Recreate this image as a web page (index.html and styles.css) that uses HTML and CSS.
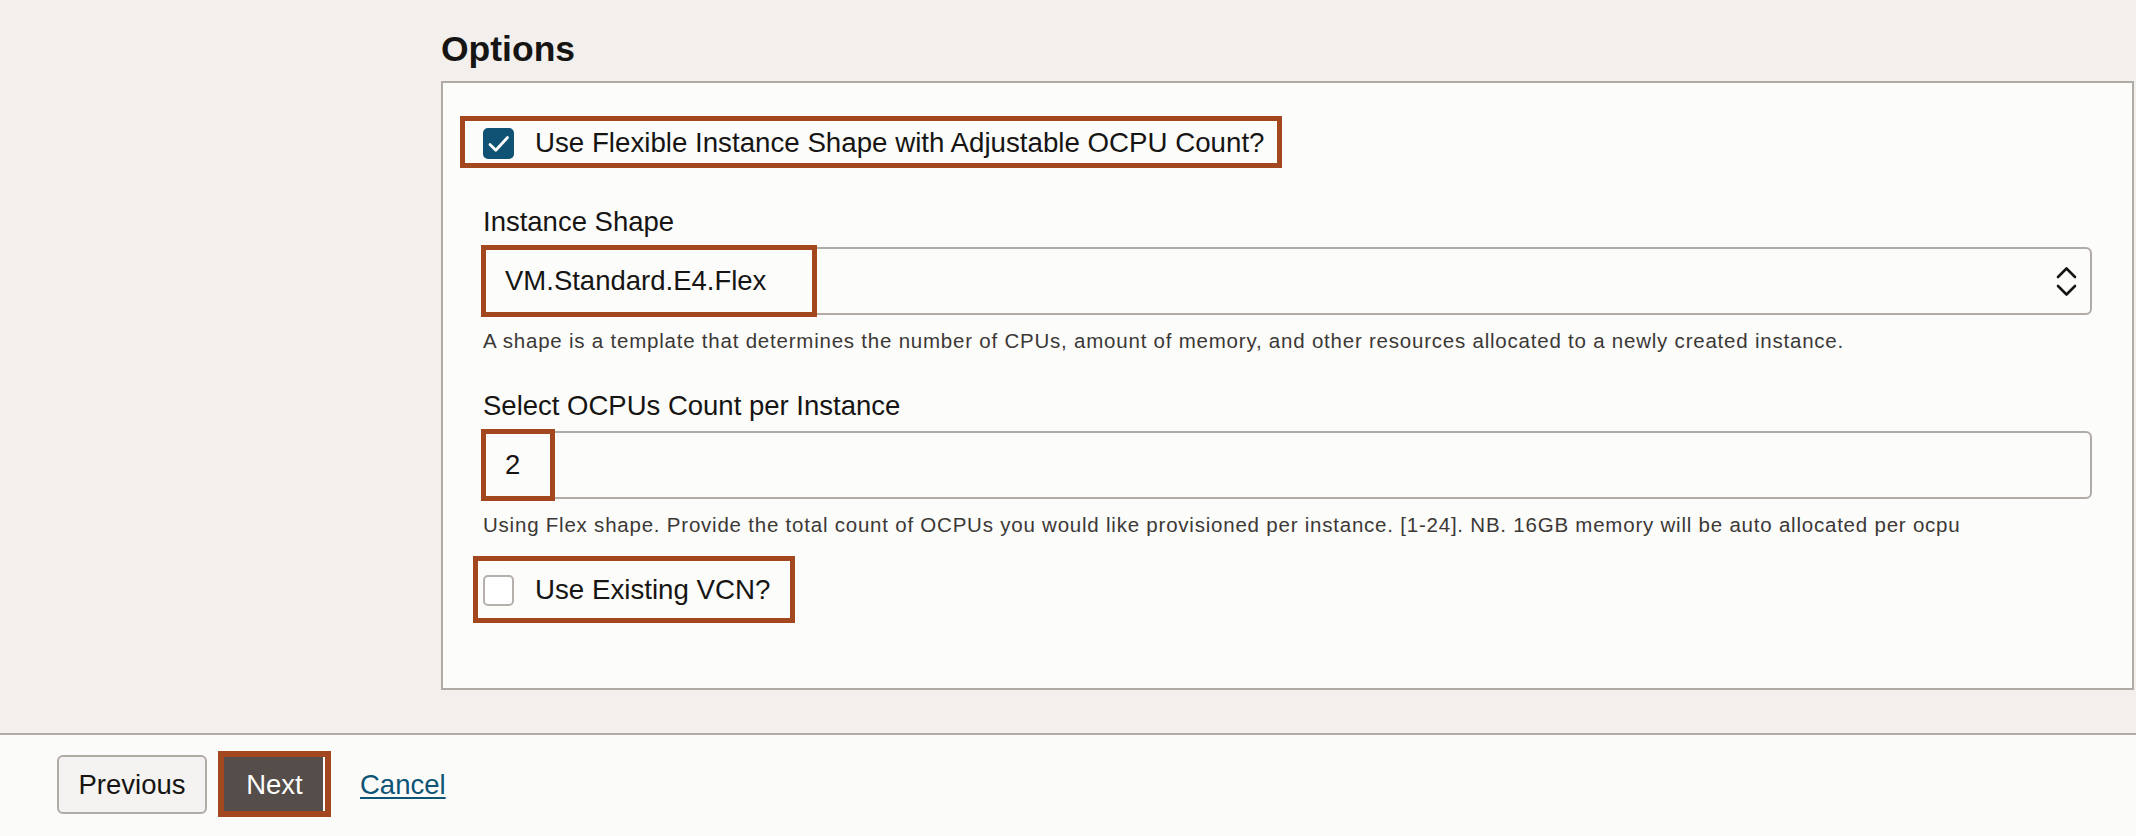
FILE: index.html
```html
<!DOCTYPE html>
<html lang="en">
<head>
<meta charset="utf-8">
<title>Options</title>
<link rel="stylesheet" href="styles.css">
</head>
<body>
<div class="page">
  <main class="content">
    <h2 class="section-title">Options</h2>
    <section class="panel">
      <label class="check-row hl hl-flex">
        <span class="checkbox is-checked">
          <svg viewBox="0 0 31 31" width="31" height="31"><path d="M7 16.5 L12.8 22.3 L24.5 9.5" fill="none" stroke="#fff" stroke-width="2.8" stroke-linecap="round" stroke-linejoin="round"/></svg>
        </span>
        <span class="check-label">Use Flexible Instance Shape with Adjustable OCPU Count?</span>
      </label>

      <div class="field field-first">
        <div class="field-label">Instance Shape</div>
        <div class="control">
          <span class="control-value hl hl-shape">VM.Standard.E4.Flex</span>
          <svg class="chevrons" viewBox="0 0 22 34" width="22" height="34"><path d="M2 13 L10.5 4.5 L19 13 M2 22 L10.5 30.5 L19 22" fill="none" stroke="#161513" stroke-width="2.6" stroke-linecap="round" stroke-linejoin="round"/></svg>
        </div>
        <div class="help">A shape is a template that determines the number of CPUs, amount of memory, and other resources allocated to a newly created instance.</div>
      </div>

      <div class="field">
        <div class="field-label">Select OCPUs Count per Instance</div>
        <div class="control">
          <span class="control-value hl hl-count">2</span>
        </div>
        <div class="help">Using Flex shape. Provide the total count of OCPUs you would like provisioned per instance. [1-24]. NB. 16GB memory will be auto allocated per ocpu</div>
      </div>

      <label class="check-row hl hl-vcn">
        <span class="checkbox"></span>
        <span class="check-label">Use Existing VCN?</span>
      </label>
    </section>
  </main>
  <footer class="footer">
    <button class="btn btn-secondary" type="button">Previous</button>
    <span class="btn-wrap">
      <button class="btn btn-primary" type="button">Next</button>
    </span>
    <a class="link" href="#">Cancel</a>
  </footer>
</div>
</body>
</html>
```

FILE: styles.css
```css
* { box-sizing: border-box; }

html, body {
  margin: 0;
  padding: 0;
}

body {
  width: 2136px;
  height: 836px;
  overflow: hidden;
  font-family: "Liberation Sans", Arial, sans-serif;
  color: #161513;
  background: #fbfbfa;
}

.page {
  display: flex;
  flex-direction: column;
  height: 836px;
}

.content {
  height: 733px;
  flex: none;
  padding: 27px 2px 0 441px;
  background: #f2efec;
}

.section-title {
  margin: 0 0 10px;
  font-size: 35.5px;
  line-height: 44px;
  font-weight: 700;
  color: #161513;
}

.panel {
  background: #fcfcfb;
  border: 2px solid #b1aba5;
  padding: 33px 40px 65px 40px;
  display: flex;
  flex-direction: column;
  align-items: flex-start;
}

.hl {
  border: 5px solid #a3471f;
}

.check-row {
  display: flex;
  align-items: center;
  font-size: 27.7px;
  line-height: 32px;
  cursor: pointer;
}

.hl-flex {
  margin-left: -23px;
  padding: 6px 12px 4px 18px;
}

.hl-vcn {
  margin-top: 19px;
  margin-left: -10px;
  padding: 13px 20px 12px 5px;
}

.checkbox {
  width: 31px;
  height: 31px;
  border-radius: 5px;
  border: 2px solid #b5b0ab;
  background: #ffffff;
  margin-right: 21px;
  position: relative;
  flex: none;
}

.checkbox.is-checked {
  background: #0f5274;
  border-color: #0f5274;
}

.checkbox svg {
  display: block;
  position: absolute;
  top: -2px;
  left: -2px;
}

.field {
  align-self: stretch;
  display: flex;
  flex-direction: column;
  margin-top: 37px;
}

.field-first {
  margin-top: 38px;
}

.field-label {
  font-size: 27.5px;
  line-height: 32px;
  margin-bottom: 9px;
}

.control {
  height: 68px;
  border: 2px solid #b1aba5;
  border-radius: 6px;
  background: #fcfcfb;
  display: flex;
  align-items: center;
  font-size: 27.5px;
  line-height: 32px;
}

.control-value {
  align-self: stretch;
  display: flex;
  align-items: center;
  margin: -4px 0 -4px -4px;
  padding: 0 46px 0 19px;
  background: #fcfcfb;
}

.hl-count {
  padding-right: 30px;
}

.chevrons {
  margin-left: auto;
  margin-right: 12px;
  display: block;
}

.help {
  margin-top: 14px;
  font-size: 20.5px;
  line-height: 24px;
  letter-spacing: 0.78px;
  color: #3b3835;
}

.footer {
  flex: none;
  height: 103px;
  border-top: 2px solid #b1aba5;
  background: #fbfbfa;
  padding: 20px 0 0 57px;
  display: flex;
  align-items: flex-start;
}

.btn {
  height: 59px;
  font-family: "Liberation Sans", Arial, sans-serif;
  font-size: 27.5px;
  line-height: 32px;
  margin: 0;
  cursor: pointer;
}

.btn-secondary {
  width: 150px;
  padding: 0;
  border: 2px solid #b1aba5;
  border-radius: 6px;
  background: #f5f3f1;
  color: #161513;
}

.btn-wrap {
  position: relative;
  margin-left: 11px;
  display: flex;
}

.btn-wrap::after {
  content: "";
  position: absolute;
  top: -4px;
  bottom: -3px;
  left: 0;
  right: -8px;
  border: 6px solid #a3471f;
  pointer-events: none;
}

.btn-primary {
  width: 105px;
  padding: 0 0 0 8px;
  border: none;
  border-radius: 0;
  background: #544d49;
  color: #ffffff;
}

.link {
  margin-left: 37px;
  height: 59px;
  display: flex;
  align-items: center;
  font-size: 27.5px;
  line-height: 32px;
  color: #0e5475;
  text-decoration: underline;
  text-underline-offset: 3px;
  text-decoration-thickness: 2px;
}
```
